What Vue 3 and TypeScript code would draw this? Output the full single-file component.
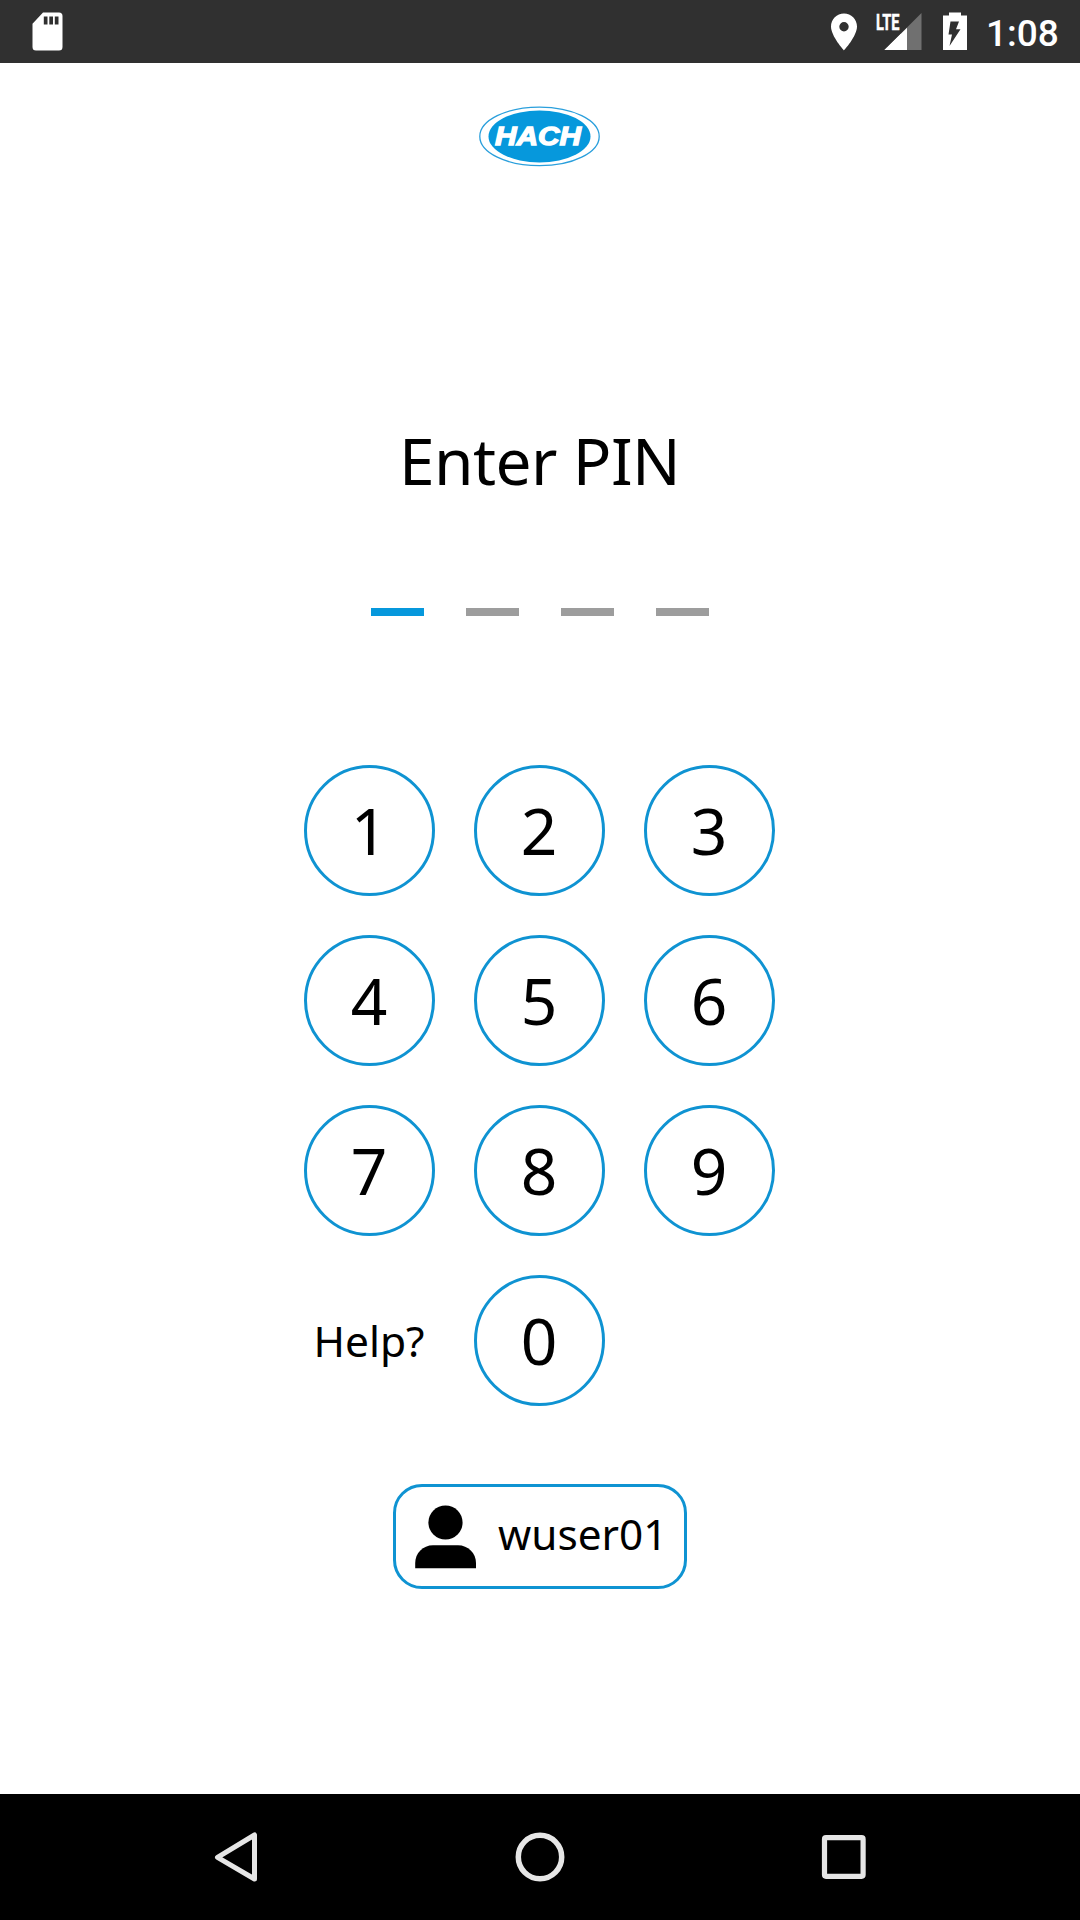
<script setup lang="ts">
import { ref } from 'vue'

const PIN_LENGTH = 4
const digits: string[] = ['1', '2', '3', '4', '5', '6', '7', '8', '9']
const pin = ref<string>('')
const userName = 'wuser01'

function press(digit: string): void {
  if (pin.value.length < PIN_LENGTH) pin.value += digit
}
</script>

<template>
  <div class="screen">
    <header class="status">
      <svg class="sd" width="32" height="40" viewBox="0 0 32 40">
        <path fill="#fff" fill-rule="evenodd" d="M12 .5H28Q31.500 .5 31.500 4V35Q31.500 38.500 28 38.500H5Q1.500 38.500 1.500 35V11.700ZM12.800 4.500v8h3.700V4.500zM18.300 4.500v8h3.700V4.500zM23.800 4.500v8h3.700V4.500z" />
      </svg>
      <svg class="indicators" width="138" height="44" viewBox="0 0 138 44">
        <path fill="#fff" fill-rule="evenodd" d="M14 3.500C6.800 3.500 1 9.300 1 16.600C1 26.400 14 40.500 14 40.500S27 26.400 27 16.600C27 9.300 21.200 3.500 14 3.500ZM14 12a4.700 4.700 0 1 1 0 9.400a4.700 4.700 0 0 1 0-9.400Z" />
        <path fill="#707070" d="M91.500 3V40H54.500Z" />
        <path fill="#fff" d="M77 17.800V40H54.500Z" />
        <path fill="#303030" d="M44 1H71V20L60 31H44Z" />
        <path fill="#fff" d="M71 23.700V40H54.500Z" />
        <text class="lte" x="46" y="19.700" textLength="23.500" lengthAdjust="spacingAndGlyphs">LTE</text>
        <path fill="#fff" d="M119 2.500H131V5.500H137V40H113V5.500H119Z" />
        <path fill="#303030" d="M120.500 11.500H129L126 19.300H130.500L119.500 36L122 24.500H118.500Z" />
      </svg>
      <span class="clock">1:08</span>
    </header>

    <main class="content">
      <svg class="logo" width="122" height="62" viewBox="0 0 122 62">
        <ellipse cx="60.500" cy="31.400" rx="59.700" ry="29.300" fill="#fff" stroke="#2a9fdc" stroke-width="1.300" />
        <ellipse cx="60.500" cy="31.400" rx="51" ry="26" fill="#0698dc" />
        <text x="16" y="40.200" textLength="86" lengthAdjust="spacingAndGlyphs">HACH</text>
      </svg>

      <h1>Enter PIN</h1>

      <div class="pin">
        <span v-for="i in PIN_LENGTH" :key="i" :class="{ active: i === pin.length + 1 }"></span>
      </div>

      <div class="pad">
        <button v-for="d in digits" :key="d" class="key" @click="press(d)">{{ d }}</button>
        <button class="help">Help?</button>
        <button class="key" @click="press('0')">0</button>
      </div>

      <button class="user">
        <svg width="62" height="64" viewBox="0 0 62 64">
          <circle cx="30.500" cy="17.500" r="17.100" />
          <path d="M.2 63.200V58C.2 48 8 40.200 18 40.200H43C53 40.200 61 48 61 58V63.200Z" />
        </svg>
        <span>{{ userName }}</span>
      </button>
    </main>

    <nav class="nav">
      <svg width="50" height="54" viewBox="0 0 50 54">
        <path d="M42.500 5V49L5.500 27.300Z" stroke-width="5" />
      </svg>
      <svg width="54" height="54" viewBox="0 0 54 54">
        <circle cx="27" cy="27" r="21.700" stroke-width="5.500" />
      </svg>
      <svg width="50" height="54" viewBox="0 0 50 54">
        <rect x="5.500" y="7.700" width="38.600" height="38.600" rx="1.500" stroke-width="5.200" />
      </svg>
    </nav>
  </div>
</template>

<style>
body {
  margin: 0;
}
</style>

<style scoped>
.screen {
  width: 1080px;
  height: 1920px;
  display: flex;
  flex-direction: column;
  background: #fff;
  color: #000;
  font-family: "Noto Sans", sans-serif;
  overflow: hidden;
}
svg {
  display: block;
  flex: none;
  overflow: visible;
}
button {
  padding: 0;
  margin: 0;
  border: 0;
  background: none;
  color: inherit;
  font: inherit;
}
.status {
  height: 63px;
  flex: none;
  display: flex;
  align-items: center;
  box-sizing: border-box;
  padding: 0 22px 0 31px;
  background: #303030;
}
.indicators {
  margin: 0 18px 0 auto;
}
.lte {
  font: 700 22.500px Roboto, sans-serif;
  fill: #fff;
  stroke: #fff;
  stroke-width: 0.500;
}
.clock {
  width: 72px;
  padding-top: 4px;
  font: 500 37px/59px Roboto, sans-serif;
  color: #fff;
  white-space: nowrap;
}
.content {
  flex: 1;
  display: flex;
  flex-direction: column;
  align-items: center;
}
.logo {
  margin-top: 42px;
}
.logo text {
  font: italic 700 25px "Liberation Sans", sans-serif;
  fill: #fff;
  stroke: #fff;
  stroke-width: 1.300;
}
h1 {
  margin: 249px 1px 0 0;
  font-size: 64px;
  line-height: 90px;
  font-weight: 400;
  letter-spacing: -0.600px;
}
.pin {
  display: flex;
  gap: 42px;
  margin-top: 102px;
}
.pin span {
  width: 53px;
  height: 8px;
  background: #9d9d9d;
}
.pin .active {
  background: #0698dc;
}
.pad {
  display: grid;
  grid-template-columns: repeat(3, 131px);
  grid-auto-rows: 131px;
  gap: 39px;
  margin: 149px 2px 0 0;
}
.key {
  box-sizing: border-box;
  border: 3px solid #0f93d2;
  border-radius: 50%;
  font-size: 64px;
  line-height: 125px;
  text-align: center;
}
.help {
  font-size: 42.500px;
  line-height: 131px;
}
.user {
  box-sizing: border-box;
  width: 294px;
  height: 105px;
  margin: 78px 0 0;
  padding-left: 19px;
  display: flex;
  align-items: center;
  gap: 21px;
  border: 3px solid #0f93d2;
  border-radius: 29px;
  font-size: 42.300px;
}
.user span {
  line-height: 60px;
  padding-bottom: 6px;
}
.nav {
  height: 126px;
  flex: none;
  box-sizing: border-box;
  padding: 0 211px 0 212px;
  display: flex;
  align-items: center;
  justify-content: space-between;
  background: #000;
}
.nav svg {
  fill: none;
  stroke: #e6e6e6;
  stroke-linejoin: round;
}
.nav svg:nth-child(2) {
  margin-right: 1px;
}
</style>
